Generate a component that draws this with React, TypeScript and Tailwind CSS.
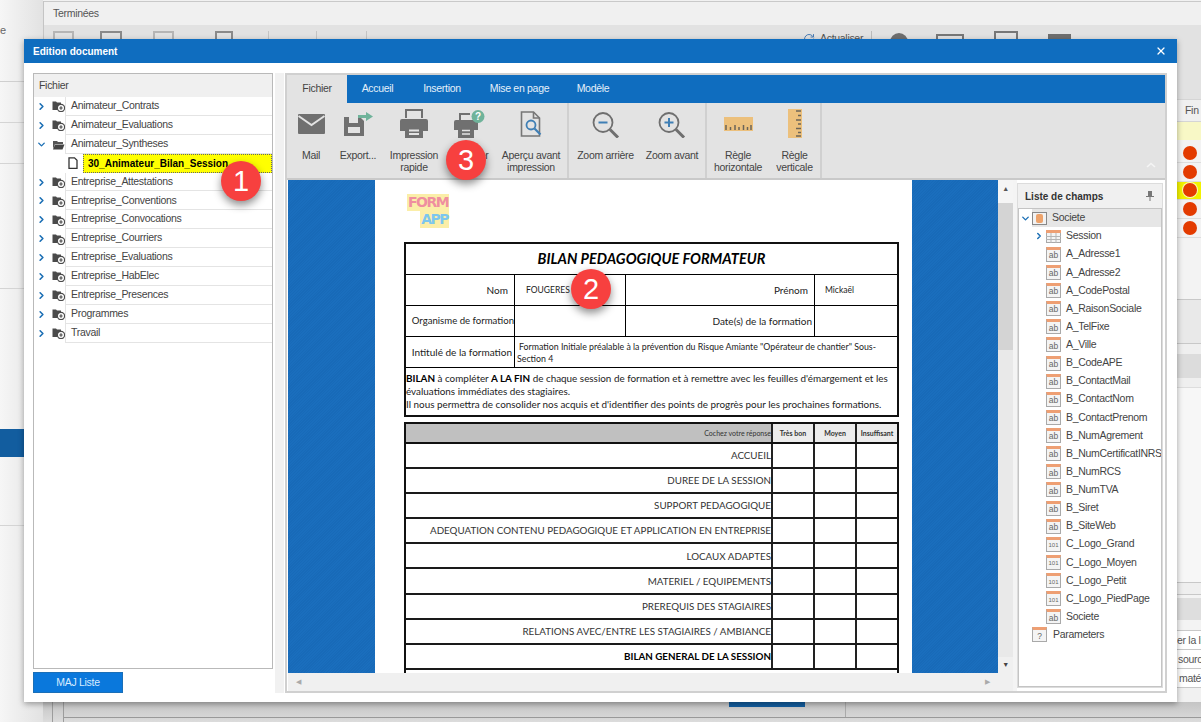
import { ChevronRight, ChevronDown, X, RefreshCw } from 'lucide-react';

const ui = 'font-["Liberation_Sans",sans-serif]';
const doc = 'font-["Lato",sans-serif]';

const folders = [
  'Animateur_Contrats', 'Animateur_Evaluations', 'Animateur_Syntheses',
  'Entreprise_Attestations', 'Entreprise_Conventions', 'Entreprise_Convocations', 'Entreprise_Courriers',
  'Entreprise_Evaluations', 'Entreprise_HabElec', 'Entreprise_Presences', 'Programmes', 'Travail',
];

const fields: [string, string][] = [
  ['A_Adresse1', 'ab'], ['A_Adresse2', 'ab'], ['A_CodePostal', 'ab'], ['A_RaisonSociale', 'ab'], ['A_TelFixe', 'ab'],
  ['A_Ville', 'ab'], ['B_CodeAPE', 'ab'], ['B_ContactMail', 'ab'], ['B_ContactNom', 'ab'], ['B_ContactPrenom', 'ab'],
  ['B_NumAgrement', 'ab'], ['B_NumCertificatINRS', 'ab'], ['B_NumRCS', 'ab'], ['B_NumTVA', 'ab'], ['B_Siret', 'ab'],
  ['B_SiteWeb', 'ab'], ['C_Logo_Grand', '101'], ['C_Logo_Moyen', '101'], ['C_Logo_Petit', '101'], ['C_Logo_PiedPage', '101'],
  ['Societe', 'ab'],
];

const criteria = [
  'ACCUEIL', 'DUREE DE LA SESSION', 'SUPPORT PEDAGOGIQUE', 'ADEQUATION CONTENU PEDAGOGIQUE ET APPLICATION EN ENTREPRISE',
  'LOCAUX ADAPTES', 'MATERIEL / EQUIPEMENTS', 'PREREQUIS DES STAGIAIRES', 'RELATIONS AVEC/ENTRE LES STAGIAIRES / AMBIANCE',
];

function Badge({ n, className }: { n: string; className: string }) {
  return (
    <div className={`absolute w-10 h-10 rounded-full bg-[#f7403f] text-white flex items-center justify-center text-[29px] leading-none font-["Liberation_Sans",sans-serif] shadow-[0_4px_8px_rgba(0,0,0,0.45)] ${className}`}>
      {n}
    </div>
  );
}

function FolderPlus({ open }: { open?: boolean }) {
  if (open) {
    return (
      <svg width="13" height="11" viewBox="0 0 13 11" className="shrink-0">
        <path d="M1 2h4l1 1h5v2H3L1 10z" fill="#555" />
        <path d="M3 5.500h9.500L10.500 10.500H1z" fill="#444" />
      </svg>
    );
  }
  return (
    <svg width="13" height="12" viewBox="0 0 13 12" className="shrink-0">
      <path d="M0.500 1.500h3.500l1 1h4v7.500H0.500z" fill="#4a4a4a" />
      <circle cx="9" cy="8" r="3.600" fill="#fff" stroke="#4a4a4a" strokeWidth="1.200" />
      <path d="M7.300 8h3.400M9 6.300v3.400" stroke="#4a4a4a" strokeWidth="1.200" />
    </svg>
  );
}

function FieldIcon({ kind }: { kind: string }) {
  return (
    <div className="w-[15px] h-[15px] shrink-0 border border-[#a9a9a9] border-t-[3px] border-t-[#ee9f73] bg-[#f4f4f4] flex items-center justify-center overflow-hidden">
      <span className={`${kind === '101' ? 'text-[6px]' : 'text-[8.500px]'} leading-none tracking-normal text-[#666]`}>{kind}</span>
    </div>
  );
}

function RibbonButton({ icon, label, className }: { icon: React.ReactNode; label: string; className: string }) {
  return (
    <div className={`flex flex-col items-center shrink-0 ${className}`}>
      <div className="h-[46px] flex items-start justify-center">{icon}</div>
      <div className="text-center leading-[12px] text-[#444] whitespace-pre-line">{label}</div>
    </div>
  );
}

const MailIcon = (
  <svg width="27" height="20" viewBox="0 0 27 20" className="mt-[11px]">
    <rect width="27" height="20" rx="1" fill="#707070" />
    <path d="M0.500 2l13 9 13-9" fill="none" stroke="#e3e3e3" strokeWidth="2" />
  </svg>
);
const ExportIcon = (
  <svg width="31" height="25" viewBox="0 0 31 25" className="mt-[9px]">
    <path d="M1 5h16l4 4v15H1z" fill="#707070" />
    <rect x="6" y="5" width="9" height="6" fill="#e3e3e3" />
    <rect x="5" y="15" width="12" height="6" fill="#e3e3e3" />
    <path d="M15 3h8V0l7 4.500-7 4.500V6h-8z" fill="#6fb39a" />
  </svg>
);
const PrinterIcon = (
  <svg width="28" height="29" viewBox="0 0 28 29" className="mt-[6px]">
    <path d="M6 9V1h16v8" fill="none" stroke="#707070" strokeWidth="2" />
    <path d="M2 10h24a2 2 0 0 1 2 2v10h-5v-5H5v5H0V12a2 2 0 0 1 2-2z" fill="#707070" />
    <rect x="5" y="17" width="18" height="12" fill="#707070" />
    <path d="M9 21.500h10M9 25h10" stroke="#e3e3e3" strokeWidth="1.800" />
  </svg>
);
const PrinterHelpIcon = (
  <svg width="31" height="28" viewBox="0 0 31 28" className="mt-[7px]">
    <path d="M6 11V4h10" fill="none" stroke="#707070" strokeWidth="2" />
    <path d="M2 10h20a2 2 0 0 1 2 2v8h-4v-4H4v4H0v-8a2 2 0 0 1 2-2z" fill="#707070" />
    <rect x="4" y="16" width="16" height="12" fill="#707070" />
    <path d="M8 20.500h8M8 24h8" stroke="#e3e3e3" strokeWidth="1.500" />
    <circle cx="24" cy="6.500" r="6.500" fill="#6fb39a" />
    <text x="24" y="10" textAnchor="middle" fontSize="10" fontWeight="700" fill="#fff" fontFamily="Liberation Sans">?</text>
  </svg>
);
const PreviewIcon = (
  <svg width="23" height="26" viewBox="0 0 23 26" className="mt-[8px]">
    <path d="M1.500 1h12l6 6v18h-18z" fill="none" stroke="#777" strokeWidth="1.600" />
    <path d="M13.500 1v6h6" fill="none" stroke="#777" strokeWidth="1.600" />
    <circle cx="11" cy="14" r="4.500" fill="#e3e3e3" stroke="#3f7fb5" strokeWidth="1.800" />
    <path d="M14.500 17.500l6 6" stroke="#3f7fb5" strokeWidth="2.200" />
  </svg>
);
function ZoomIcon({ plus }: { plus?: boolean }) {
  return (
    <svg width="28" height="26" viewBox="0 0 28 26" className="mt-[9px]">
      <circle cx="11" cy="10.500" r="9.500" fill="none" stroke="#6f6f6f" strokeWidth="1.800" />
      <path d="M18 17.500l8 8" stroke="#6f6f6f" strokeWidth="3" />
      <path d="M6.500 10.500h9" stroke="#3f7fb5" strokeWidth="2" />
      {plus && <path d="M11 6v9" stroke="#3f7fb5" strokeWidth="2" />}
    </svg>
  );
}
const RulerH = (
  <svg width="29" height="14" viewBox="0 0 29 14" className="mt-[14px]">
    <rect width="29" height="14" fill="#ecc07c" />
    <path d="M2 13V8M6.500 13V10M11 13V8M15 13V10M19.500 13V8M23.500 13V10M27 13V8" stroke="#6b6458" strokeWidth="1.500" />
  </svg>
);
const RulerV = (
  <svg width="14" height="29" viewBox="0 0 14 29" className="mt-[6px]">
    <rect width="14" height="29" fill="#ecc07c" />
    <path d="M13 2H8M13 6.500h-3M13 11H8M13 15h-3M13 19.500H8M13 23.500h-3M13 27H8" stroke="#6b6458" strokeWidth="1.500" />
  </svg>
);

const hatch = 'bg-[#1a6ebd] bg-[repeating-linear-gradient(135deg,#1a6ebd_0px,#1a6ebd_1px,#186ab8_1px,#186ab8_2px)]';

function DocRow({ label, bold }: { label: string; bold?: boolean }) {
  return (
    <div className="flex h-[25.100px] border-b-2 border-[#1a1a1a] shrink-0">
      <div className={`flex-1 flex items-center justify-end text-[9.800px] whitespace-nowrap text-[#333] ${bold ? 'font-bold text-black' : ''}`}>{label}</div>
      <div className="w-[42px] border-l-2 border-[#222]" />
      <div className="w-[42px] border-l-2 border-[#222]" />
      <div className="w-[42px] border-l-2 border-[#222]" />
    </div>
  );
}

function Paper() {
  return (
    <div className={`w-[537px] h-full bg-white overflow-hidden pt-[14px] pl-[29px] tracking-normal ${doc} shrink-0`}>
      <div className="h-[48px] w-[50px] flex flex-col font-['DejaVu_Sans',sans-serif] font-bold text-[14px] leading-[17px] tracking-[-1.500px]">
        <span className="self-start ml-[3px] px-[1px] bg-[#fbeea8] text-[#ef8ea0]">FORM</span>
        <span className="self-end mr-[5px] px-[1px] bg-[#fbeea8] text-[#7cc6ee]">APP</span>
      </div>
      <div className="w-[495px] border-2 border-[#111] border-b-0 text-[10px] text-[#222]">
        <div className="h-[31px] flex items-center justify-center border-b-[1.500px] border-black text-[14.500px] font-bold italic text-black">BILAN PEDAGOGIQUE FORMATEUR</div>
        <div className="h-[31px] flex border-b-[1.500px] border-black">
          <div className="w-[108px] flex items-center justify-end pr-[6px]">Nom</div>
          <div className="w-[111px] border-l-[1.500px] border-black flex items-center pl-[11px] text-[8.500px]">FOUGERES</div>
          <div className="w-[189px] border-l-[1.500px] border-black flex items-center justify-end pr-[6px]">Prénom</div>
          <div className="flex-1 border-l-[1.500px] border-black flex items-center pl-[10px] text-[8.500px]">Mickaël</div>
        </div>
        <div className="h-[31px] flex border-b-[1.500px] border-black">
          <div className="w-[108px] flex items-center justify-end whitespace-nowrap text-[9.600px]">Organisme de formation</div>
          <div className="w-[111px] border-l-[1.500px] border-black" />
          <div className="w-[189px] border-l-[1.500px] border-black flex items-center justify-end pr-[2px]">Date(s) de la formation</div>
          <div className="flex-1 border-l-[1.500px] border-black" />
        </div>
        <div className="h-[31px] flex border-b-[1.500px] border-black">
          <div className="w-[108px] flex items-center justify-end pr-[2px] whitespace-nowrap">Intitulé de la formation</div>
          <div className="flex-1 border-l-[1.500px] border-black pl-[2px] pt-[4px] text-[8.800px] leading-[11.500px] whitespace-nowrap">
            <span className="pl-[2px]">Formation Initiale préalable à la prévention du Risque Amiante "Opérateur de chantier" Sous-</span>
            <br />Section 4
          </div>
        </div>
      </div>
      <div className="w-[495px] h-[49px] border-2 border-t-0 border-[#111] text-[9.900px] leading-[13px] text-[#222] pt-[4px] whitespace-nowrap">
        <b className="text-black">BILAN</b> à compléter <b className="text-black">A LA FIN</b> de chaque session de formation et à remettre avec les feuilles d'émargement et les<br />
        évaluations immédiates des stagiaires.<br />
        Il nous permettra de consolider nos acquis et d'identifier des points de progrès pour les prochaines formations.
      </div>
      <div className="w-[495px] mt-[5px] border-2 border-b-0 border-[#111] flex flex-col">
        <div className="flex h-[20px] bg-[#c0c0c0] border-b-2 border-[#111] shrink-0 text-[7px] font-bold text-[#333]">
          <div className="flex-1 flex items-center justify-end font-normal whitespace-nowrap">Cochez votre réponse</div>
          <div className="w-[42px] border-l-2 border-[#222] bg-[#ececec] flex items-center justify-center">Très bon</div>
          <div className="w-[42px] border-l-2 border-[#222] bg-[#ececec] flex items-center justify-center">Moyen</div>
          <div className="w-[42px] border-l-2 border-[#222] bg-[#ececec] flex items-center justify-center">Insuffisant</div>
        </div>
        {criteria.map((c) => <DocRow key={c} label={c} />)}
        <DocRow label="BILAN GENERAL DE LA SESSION" bold />
        <div className="h-[20px] pt-[2px] pl-[55px] text-[10px] text-[#333] whitespace-nowrap">Commentaires sur la session de formation et les points à améliorer :</div>
      </div>
    </div>
  );
}

export default function App() {
  return (
    <div className={`relative w-[1201px] h-[722px] overflow-hidden bg-[#f1f1f1] flex ${ui} text-[10.500px] tracking-[-0.3px] text-[#444]`}>
      {/* application behind the dialog */}
      <div className="w-[43px] shrink-0 flex flex-col bg-[linear-gradient(90deg,#f6f6f6,#e2e2e2)]">
        <div className="h-[82px] border-b border-[#cfcfcf] pt-[22px] text-[11px] text-[#666]">e</div>
        <div className="h-[41px] border-b border-[#d4d4d4]" />
        <div className="h-[41px] border-b border-[#d4d4d4]" />
        <div className="h-[125px] border-b border-[#d4d4d4]" />
        <div className="h-[140px]" />
        <div className="h-[28px] bg-[#125d9f]" />
        <div className="h-[69px] border-b border-[#d4d4d4]" />
        <div className="flex-1" />
      </div>
      <div className="flex-1 flex flex-col border-l border-[#c4c4c4] mt-[1px]">
        <div className="h-[24px] border-t border-[#c9c9c9] bg-[#f0f0f0] pl-[9px] pt-[1px] flex items-center text-[#555]">Terminées</div>
        <div className="h-[60px] bg-[#e2e2e2] flex items-start pt-[6px]">
          <div className="ml-[9px] w-[21px] h-[14px] border-2 border-[#b5b5b5]" />
          <div className="ml-[26px] w-[22px] h-[14px] border-2 border-[#8a8a8a]" />
          <div className="ml-[31px] w-[21px] h-[14px] border-2 border-[#b5b5b5]" />
          <div className="ml-[41px] w-[18px] h-[14px] border-2 border-[#8a8a8a]" />
          <div className="ml-[35px] h-[14px] border-l border-[#c4c4c4]" />
          <div className="ml-[47px] h-[14px] border-l border-[#c4c4c4]" />
          <div className="ml-[49px] h-[14px] border-l border-[#c4c4c4]" />
          <div className="ml-[436px] w-[60px] flex items-center gap-[5px] text-[#555]"><RefreshCw size={12} className="text-[#4a7db5] shrink-0" />Actualiser</div>
          <div className="ml-[8px] h-[14px] border-l border-[#bbb]" />
          <div className="ml-[18px] mt-[2px] w-[18px] h-[12px] rounded-t-full bg-[#6f6f6f]" />
          <div className="ml-[28px] mt-[3px] w-[28px] h-[14px] border-2 border-[#777]" />
          <div className="ml-[30px] w-[24px] h-[14px] border-2 border-[#777]" />
          <div className="ml-[30px] mt-[3px] w-[23px] h-[14px] bg-[#6f6f6f]" />
        </div>
      </div>

      {/* right hand column of the list behind */}
      <div className="absolute right-0 top-[85px] w-[24px] flex flex-col bg-[#f3f3f3] text-[#555]">
        <div className="h-[14px] bg-[#e2e2e2]" />
        <div className="h-[23px] flex items-center pl-[8px] bg-[#f0f0f0] border-y border-[#d5d5d5]">Fin</div>
        <div className="h-[18px] bg-[#f8f8c6]" />
        <div className="h-[4px]" />
        {['', '', 'y', '', ''].map((y, i) => (
          <div key={i} className={`h-[18.800px] border-b border-[#ddd] pl-[6px] flex items-center ${y ? 'bg-[#f2f200]' : ''}`}>
            <div className={`w-[14px] h-[14px] rounded-full bg-[#e33b00] ${y ? 'ring-1 ring-white/70' : ''}`} />
          </div>
        ))}
        <div className="h-[61px]" />
        <div className="h-[44px] border-t border-[#c8c8c8] bg-[#e9e9e9]" />
        <div className="h-[11px] border-t border-[#c8c8c8] bg-[#efefef]" />
        <div className="h-[24px] bg-[#dcdcdc]" />
        <div className="h-[10px] border-b border-[#ddd] bg-[#efefef]" />
        <div className="h-[194px] bg-[#f7f7f7]" />
        <div className="h-[12px] border-t border-[#c8c8c8] bg-[#efefef]" />
        <div className="h-[4px] border-t border-[#c8c8c8]" />
        <div className="h-[22px] bg-[#dedede]" />
        <div className="h-[11px] border-b border-[#c8c8c8]" />
        <div className="h-[19px] border-b border-[#c8c8c8] bg-white whitespace-nowrap overflow-hidden leading-[19px]">er la li</div>
        <div className="h-[19px] border-b border-[#c8c8c8] bg-white whitespace-nowrap overflow-hidden leading-[19px] pl-[1px]">sourc</div>
        <div className="h-[19px] border-b border-[#c8c8c8] bg-white whitespace-nowrap overflow-hidden leading-[19px] pl-[2px]">maté</div>
      </div>

      {/* bottom strip behind the dialog */}
      <div className="absolute left-[43px] right-0 bottom-0 h-[20px] bg-[linear-gradient(180deg,#c4c4c4,#dcdcdc)] flex items-start">
        <div className="w-[10px] h-full border-r border-[#9c9c9c]" />
        <div className="w-[11px] h-full border-r border-[#9c9c9c]" />
        <div className="flex-1 h-[16px] border-b border-[#999] flex items-start">
          <div className="ml-[665px] w-[76px] h-[5px] bg-[#125d9f]" />
          <div className="ml-[40px] h-full border-l border-[#aaa]" />
        </div>
      </div>

      {/* dialog */}
      <div className="absolute left-[24px] top-[39px] w-[1153px] h-[663px] bg-white flex flex-col shadow-[0_2px_6px_rgba(0,0,0,0.35)]">
        <div className="h-[24px] shrink-0 bg-[#0f6dbf] flex items-center justify-between pl-[9px] pr-[10px] text-white">
          <span className="font-bold text-[10px] tracking-normal">Edition document</span>
          <X size={12} strokeWidth={2.500} />
        </div>
        <div className="flex-1 flex pl-[9px] pt-[10px] pb-[9px] pr-[9px]">
          {/* file tree */}
          <div className="w-[240px] shrink-0 flex flex-col">
            <div className="h-[596px] border border-[#b9b9b9] flex flex-col overflow-hidden">
              <div className="h-[23px] shrink-0 bg-[#f0f0f0] pl-[5px] flex items-center">Fichier</div>
              {folders.map((f) => {
                const open = f === 'Animateur_Syntheses';
                return (
                  <div key={f}>
                    <div className="h-[18.900px] flex items-center pl-[2px]">
                      {open
                        ? <ChevronDown size={11} strokeWidth={3} className="text-[#1b6fb5] shrink-0" />
                        : <ChevronRight size={11} strokeWidth={3.500} className="text-[#1b6fb5] shrink-0" />}
                      <div className="ml-[5px] shrink-0"><FolderPlus open={open} /></div>
                      <div className="flex-1 h-full border-l border-b border-[#e4e4e4] pl-[5px] flex items-center">{f}</div>
                    </div>
                    {open && (
                      <div className="h-[18.900px] flex items-center pl-[34px]">
                        <svg width="10" height="12" viewBox="0 0 10 12" className="shrink-0">
                          <path d="M1 0.800h5.500l2.500 2.500v8H1z" fill="#fff" stroke="#333" strokeWidth="1.300" />
                        </svg>
                        <div className="flex-1 ml-[5px] h-full bg-[#ffff00] border border-dotted border-[#666] flex items-center pl-[4px] font-bold text-[10px] tracking-normal text-black whitespace-nowrap">30_Animateur_Bilan_Session</div>
                      </div>
                    )}
                  </div>
                );
              })}
            </div>
            <div className="mt-[3px] w-[90px] h-[21px] bg-[#0a78dc] border border-[#1a6fb8] text-[#d8ecff] flex items-center justify-center">MAJ Liste</div>
          </div>

          <div className="w-[9px] ml-[2px] mr-[1px] h-[620px] bg-[#f1f1f1] shrink-0" />

          {/* designer */}
          <div className="w-[882px] h-[620px] border-2 border-[#d0d0d0] flex flex-col shrink-0 overflow-hidden">
            <div className="h-[28px] shrink-0 bg-[#0f6dbf] flex items-stretch text-[#e4f0fa]">
              <div className="w-[60px] bg-[#e3e3e3] text-[#444] flex items-center justify-center">Fichier</div>
              <div className="w-[61px] flex items-center justify-center">Accueil</div>
              <div className="w-[68px] flex items-center justify-center">Insertion</div>
              <div className="w-[87px] flex items-center justify-center">Mise en page</div>
              <div className="w-[60px] flex items-center justify-center">Modèle</div>
            </div>
            <div className="h-[77px] shrink-0 bg-[#e3e3e3] border-b-2 border-[#c9c9c9] flex relative">
              <RibbonButton icon={MailIcon} label="Mail" className="w-[48px]" />
              <RibbonButton icon={ExportIcon} label="Export..." className="w-[46px]" />
              <RibbonButton icon={PrinterIcon} label={'Impression\nrapide'} className="w-[66px]" />
              <RibbonButton icon={PrinterHelpIcon} label="Imprimer" className="w-[44px]" />
              <RibbonButton icon={PreviewIcon} label={'Aperçu avant\nimpression'} className="w-[78px] pl-[4px] border-r-2 border-[#d0d0d0]" />
              <RibbonButton icon={<ZoomIcon />} label="Zoom arrière" className="w-[70px] pl-[3px]" />
              <RibbonButton icon={<ZoomIcon plus />} label="Zoom avant" className="w-[68px] border-r-2 border-[#d0d0d0]" />
              <RibbonButton icon={RulerH} label={'Règle\nhorizontale'} className="w-[62px]" />
              <RibbonButton icon={RulerV} label={'Règle\nverticale'} className="w-[53px] border-r-2 border-[#d0d0d0]" />
              <svg width="10" height="6" viewBox="0 0 10 6" className="absolute right-[9px] bottom-[10px]"><path d="M1 5l4-3.500 4 3.500" fill="none" stroke="#f5f5f5" strokeWidth="1.500" /></svg>
            </div>
            <div className="flex-1 min-h-0 flex pl-[1px]">
              <div className="w-[725px] shrink-0 flex flex-col">
                <div className="flex-1 min-h-0 flex">
                  <div className="w-[710px] shrink-0 flex overflow-hidden">
                    <div className={`w-[87px] shrink-0 ${hatch}`} />
                    <Paper />
                    <div className={`flex-1 ${hatch}`} />
                  </div>
                  <div className="w-[15px] shrink-0 bg-[#e9e9e9] flex flex-col items-center">
                    <div className="w-full h-[23px] bg-[#f5f5f5] text-center text-[7px] text-[#555] pt-[4px]">▲</div>
                    <div className="w-full h-[147px] bg-[#d4d4d4]" />
                    <div className="w-full flex-1" />
                    <div className="w-full h-[16px] bg-[#f0f0f0] text-center text-[7px] text-[#444] pt-[3px]">▼</div>
                  </div>
                </div>
                <div className="h-[18px] shrink-0 bg-[#f0f0f0] flex items-center justify-between px-[8px] text-[7px] text-[#aaa]"><span>◀</span><span className="mr-[15px]">▶</span></div>
              </div>
              <div className="w-[4px] shrink-0 bg-[#f4f4f4]" />
              <div className="w-[146px] min-w-0 shrink-0 flex flex-col border border-[#dcdcdc] mt-[3px] mb-[3px]">
                <div className="h-[24px] shrink-0 bg-[#f0f0f0] flex items-center justify-between pl-[7px] pr-[8px] font-bold text-[10px] tracking-normal text-[#333]">
                  Liste de champs
                  <svg width="8" height="10" viewBox="0 0 8 10"><path d="M2 0h4v5h2v1H4.500v4h-1V6H0V5h2z" fill="#777" /></svg>
                </div>
                <div className="flex-1 border border-[#c4c4c4] bg-white flex flex-col overflow-hidden">
                  <div className="h-[18.130px] shrink-0 flex items-center">
                    <ChevronDown size={11} strokeWidth={3} className="ml-[1px] text-[#1b6fb5] shrink-0" />
                    <div className="flex-1 h-full ml-[1px] bg-[#e6e6e6] flex items-center">
                      <div className="w-[15px] h-[13px] border border-[#888] bg-[#f2f2f2] flex items-center justify-center shrink-0"><div className="w-[7px] h-[9px] rounded-[2px] bg-[#eda36c]" /></div>
                      <span className="ml-[5px]">Societe</span>
                    </div>
                  </div>
                  <div className="h-[18.130px] shrink-0 flex items-center pl-[15px]">
                    <ChevronRight size={10} strokeWidth={3.500} className="text-[#1b6fb5] shrink-0" />
                    <svg width="15" height="13" viewBox="0 0 15 13" className="shrink-0 ml-[2px]">
                      <rect x="0.500" y="0.500" width="14" height="12" fill="#f4f4f4" stroke="#a9a9a9" />
                      <rect x="0" y="0" width="15" height="3" fill="#ee9f73" />
                      <path d="M0 6.500h15M0 9.500h15M5 3v10M10 3v10" stroke="#b5b5b5" />
                    </svg>
                    <span className="ml-[5px]">Session</span>
                  </div>
                  {fields.map(([name, kind], i) => (
                    <div key={i} className="h-[18.130px] shrink-0 flex items-center pl-[27px]">
                      <FieldIcon kind={kind} />
                      <span className="ml-[5px] whitespace-nowrap">{name}</span>
                    </div>
                  ))}
                  <div className="h-[18.130px] shrink-0 flex items-center pl-[13px]">
                    <FieldIcon kind="?" />
                    <span className="ml-[6px]">Parameters</span>
                  </div>
                </div>
              </div>
            </div>
          </div>
        </div>
      </div>

      <Badge n="1" className="left-[221px] top-[161px]" />
      <Badge n="2" className="left-[571px] top-[269px]" />
      <Badge n="3" className="left-[446px] top-[140px]" />
    </div>
  );
}
